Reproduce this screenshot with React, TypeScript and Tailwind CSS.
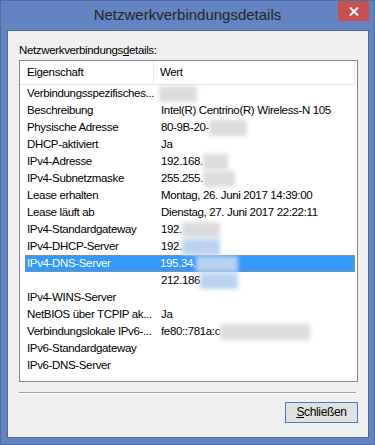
const rows: { name: string; value?: string; blur?: [number, number]; selected?: boolean; tint?: boolean }[] = [
  { name: "Verbindungsspezifisches...", value: "", blur: [-2, 38] },
  { name: "Beschreibung", value: "Intel(R) Centrino(R) Wireless-N 105" },
  { name: "Physische Adresse", value: "80-9B-20-", blur: [0, 38] },
  { name: "DHCP-aktiviert", value: "Ja" },
  { name: "IPv4-Adresse", value: "192.168.", blur: [0, 25] },
  { name: "IPv4-Subnetzmaske", value: "255.255.", blur: [0, 32] },
  { name: "Lease erhalten", value: "Montag, 26. Juni 2017 14:39:00" },
  { name: "Lease läuft ab", value: "Dienstag, 27. Juni 2017 22:22:11" },
  { name: "IPv4-Standardgateway", value: "192.", blur: [0, 38] },
  { name: "IPv4-DHCP-Server", value: "192.", blur: [0, 38], tint: true },
  { name: "IPv4-DNS-Server", value: "195.34.", blur: [0, 42], selected: true },
  { name: "", value: "212.186", blur: [0, 38], tint: true },
  { name: "IPv4-WINS-Server" },
  { name: "NetBIOS über TCPIP ak...", value: "Ja" },
  { name: "Verbindungslokale IPv6-...", value: "fe80::781a:c", blur: [0, 90] },
  { name: "IPv6-Standardgateway" },
  { name: "IPv6-DNS-Server" },
];

function Blur({ offset, width, tint }: { offset: number; width: number; tint?: boolean }) {
  return (
    <span
      className={`inline-block h-[16px] align-middle blur-[2px] ${tint ? "bg-[#b9d3f0]" : "bg-[#dcdcdc]"}`}
      style={{ marginLeft: offset, width }}
    />
  );
}

export default function App() {
  return (
    <div
      className="relative w-[375px] h-[445px] bg-[#6284c0] border border-[#4d6fa8] overflow-hidden"
      style={{ fontFamily: '"Liberation Sans", Arial, sans-serif' }}
    >
      <div className="h-[29px] flex items-center justify-center text-[15px] text-[#262626] pb-[1px]">
        Netzwerkverbindungsdetails
      </div>
      <div className="absolute top-0 right-[5px] w-[31px] h-[20px] bg-[#c75050] flex items-center justify-center">
        <svg width="10" height="9" viewBox="0 0 10 9">
          <path d="M1 0.5 L9 8.5 M9 0.5 L1 8.5" stroke="#fff" strokeWidth="2" />
        </svg>
      </div>

      <div className="ml-[6px] w-[362px] h-[408px] border border-[#4f68a0] bg-[#f0f0f0] text-[11.5px] tracking-[-0.35px] text-black">
        <div className="pl-[11px] pt-[12px] h-[29px] leading-[14px]">
          Netzwerkverbindungs<span className="underline">d</span>etails:
        </div>
        <div className="ml-[11px] w-[339px] h-[322px] border border-[#828790] bg-white">
          <div className="flex h-[24px] border-b border-[#e5e5e5] mr-[2px]">
            <div className="w-[134px] pl-[7px] flex items-center border-r border-[#e5eef8]">Eigenschaft</div>
            <div className="flex-1 pl-[6px] flex items-center border-r border-[#e5eef8]">Wert</div>
          </div>
          {rows.map((r, i) => (
            <div key={i} className="h-[17px] flex items-center whitespace-nowrap">
              {r.selected ? (
                <div className="ml-[5px] w-[330px] h-[17px] flex items-center bg-[#3399ff] text-white border border-dotted border-[#c78a3a]">
                  <div className="w-[128px] pl-[1px]">{r.name}</div>
                  <div className="pl-[6px] flex items-center">
                    {r.value}
                    {r.blur && <Blur offset={r.blur[0]} width={r.blur[1]} tint />}
                  </div>
                </div>
              ) : (
                <>
                  <div className="w-[135px] pl-[7px] overflow-hidden">{r.name}</div>
                  <div className="pl-[6px] flex items-center">
                    {r.value}
                    {r.blur && <Blur offset={r.blur[0]} width={r.blur[1]} tint={r.tint} />}
                  </div>
                </>
              )}
            </div>
          ))}
        </div>
        <div className="ml-[11px] mt-[10px] w-[337px] h-[2px] border-t border-[#a0a0a0] border-b border-b-white" />
        <div className="flex justify-end pr-[10px] mt-[8px]">
          <button className="w-[73px] h-[21px] border border-[#3c7fd6] bg-[#e1e1e1] text-[12px] leading-[17px] flex items-center justify-center">
            <span className="underline">S</span>chließen
          </button>
        </div>
      </div>
    </div>
  );
}
